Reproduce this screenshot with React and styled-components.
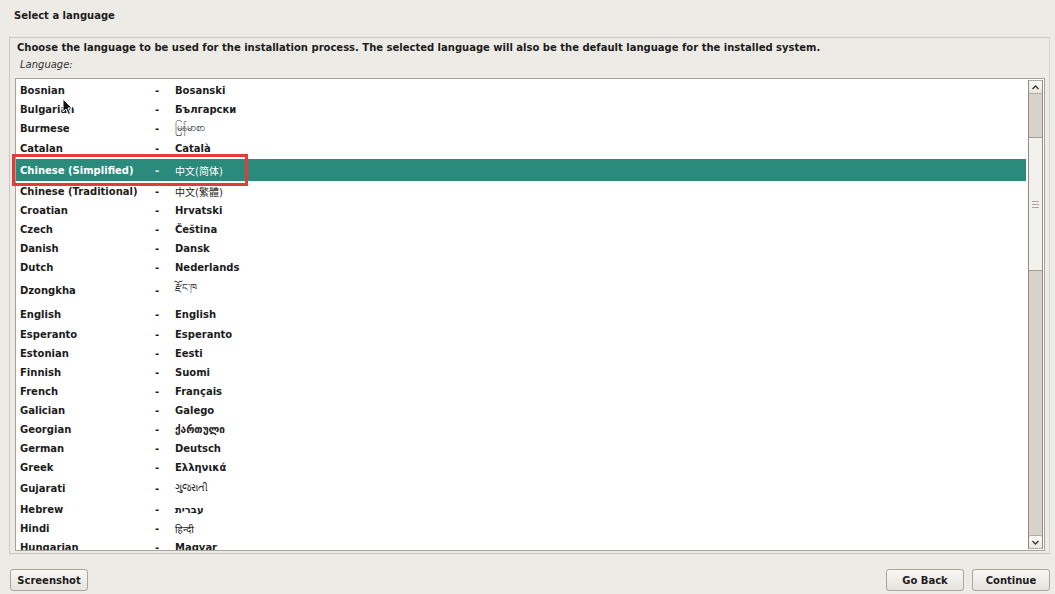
import React from "react";
import styled, { createGlobalStyle } from "styled-components";

// [english name, native name, row height, native drawn in regular weight]
const languages = [
  ["Bosnian", "Bosanski", 19],
  ["Bulgarian", "Български", 19],
  ["Burmese", "မြန်မာစာ", 19, true],
  ["Catalan", "Català", 21],
  ["Chinese (Simplified)", "中文(简体)", 22, true],
  ["Chinese (Traditional)", "中文(繁體)", 20, true],
  ["Croatian", "Hrvatski", 19],
  ["Czech", "Čeština", 19],
  ["Danish", "Dansk", 19],
  ["Dutch", "Nederlands", 19],
  ["Dzongkha", "རྫོང་ཁ", 26, true],
  ["English", "English", 22],
  ["Esperanto", "Esperanto", 19],
  ["Estonian", "Eesti", 19],
  ["Finnish", "Suomi", 19],
  ["French", "Français", 19],
  ["Galician", "Galego", 19],
  ["Georgian", "ქართული", 19],
  ["German", "Deutsch", 19],
  ["Greek", "Ελληνικά", 19],
  ["Gujarati", "ગુજરાતી", 22, true],
  ["Hebrew", "עברית", 20],
  ["Hindi", "हिन्दी", 19, true],
  ["Hungarian", "Magyar", 19],
  ["Icelandic", "Íslenska", 19],
];

const SELECTED = "Chinese (Simplified)";

const App = () => {
  return (
    <Page>
      <GlobalStyle />
      <Title>Select a language</Title>
      <Frame>
        <Description>
          Choose the language to be used for the installation process. The selected language will also be the default language for the installed system.
        </Description>
        <FieldLabel>Language:</FieldLabel>
        <ListBox>
          <Rows>
            {languages.map(([name, native, h, plain]) => (
              <Row key={name} $height={h} $selected={name === SELECTED}>
                <Name>{name}</Name>
                <Dash>-</Dash>
                <Native $plain={plain}>{native}</Native>
              </Row>
            ))}
            <Cursor width="12" height="18" viewBox="0 0 12 18">
              <path d="M1 1 L1 14 L4 11 L6.5 16.5 L8.5 15.5 L6 10 L10 10 Z" fill="#111" stroke="#fff" strokeWidth="1" />
            </Cursor>
          </Rows>
          <Scrollbar>
            <ArrowBtn>
              <svg width="7" height="5" viewBox="0 0 7 5">
                <path d="M0.5 4 L3.5 1 L6.5 4" fill="none" stroke="#333" strokeWidth="1.3" />
              </svg>
            </ArrowBtn>
            <Trough>
              <TroughGap $height={43} />
              <Thumb>
                <Grip />
                <Grip />
                <Grip />
              </Thumb>
            </Trough>
            <ArrowBtn>
              <svg width="7" height="5" viewBox="0 0 7 5">
                <path d="M0.5 1 L3.5 4 L6.5 1" fill="none" stroke="#333" strokeWidth="1.3" />
              </svg>
            </ArrowBtn>
          </Scrollbar>
          <Marker />
        </ListBox>
      </Frame>
      <Footer>
        <Button>Screenshot</Button>
        <ButtonGroup>
          <Button>Go Back</Button>
          <Button>Continue</Button>
        </ButtonGroup>
      </Footer>
    </Page>
  );
};

export default App;

const GlobalStyle = createGlobalStyle`
  html, body {
    margin: 0;
    padding: 0;
    background: #edebe6;
  }
  body {
    font-family: "DejaVu Sans", "Noto Sans", "Noto Sans CJK SC", sans-serif;
    color: #1c1c1c;
  }
`;

const Page = styled.div`
  width: 1055px;
  height: 594px;
  overflow: hidden;
  display: flex;
  flex-direction: column;
  background: #edebe6;
`;

const Title = styled.div`
  height: 37px;
  padding: 9px 0 0 14px;
  box-sizing: border-box;
  font-size: 10px;
  font-weight: bold;
  line-height: 13px;
`;

const Frame = styled.div`
  margin: 0 5px 0 9px;
  height: 517px;
  box-sizing: border-box;
  border: 1px solid #cbc6be;
  border-right-color: #d8d4cd;
  padding: 3px 4px 2px 5px;
  display: flex;
  flex-direction: column;
`;

const Description = styled.div`
  font-size: 10px;
  font-weight: bold;
  line-height: 14px;
  padding-left: 2px;
  white-space: nowrap;
`;

const FieldLabel = styled.div`
  font-size: 10px;
  font-style: italic;
  color: #333;
  line-height: 14px;
  padding: 3px 0 0 5px;
  height: 23px;
  box-sizing: border-box;
`;

const ListBox = styled.div`
  position: relative;
  flex: 1;
  display: flex;
  border: 1px solid #a7a29a;
  background: #fff;
  min-height: 0;
`;

const Rows = styled.div`
  position: relative;
  flex: 1;
  overflow: hidden;
  padding-top: 2px;
`;

const Row = styled.div`
  display: flex;
  align-items: center;
  height: ${p => p.$height}px;
  margin-right: 2px;
  padding-left: 4px;
  font-size: 10px;
  font-weight: bold;
  white-space: nowrap;
  background: ${p => (p.$selected ? "#2a8a7b" : "transparent")};
  color: ${p => (p.$selected ? "#fff" : "#1c1c1c")};
`;

const Name = styled.span`
  width: 135px;
`;

const Dash = styled.span`
  width: 20px;
`;

const Native = styled.span`
  font-weight: ${p => (p.$plain ? "normal" : "bold")};
`;

const Marker = styled.div`
  position: absolute;
  left: -4px;
  top: 75px;
  width: 230px;
  height: 26px;
  border: 3px solid #e23b3b;
  pointer-events: none;
`;

const Cursor = styled.svg`
  position: absolute;
  left: 46px;
  top: 19px;
`;

const Scrollbar = styled.div`
  width: 13px;
  margin: 1px 1px 1px 0;
  display: flex;
  flex-direction: column;
  border-left: 1px solid #8f8a82;
  border-right: 1px solid #8f8a82;
  background: #d7d2ca;
`;

const ArrowBtn = styled.div`
  height: 12px;
  display: flex;
  align-items: center;
  justify-content: center;
  background: linear-gradient(#fbfaf8, #e9e6e1);
  border-top: 1px solid #b0aba3;
  border-bottom: 1px solid #b0aba3;
  border-radius: 2px;
`;

const Trough = styled.div`
  flex: 1;
  display: flex;
  flex-direction: column;
`;

const TroughGap = styled.div`
  height: ${p => p.$height}px;
`;

const Thumb = styled.div`
  height: 132px;
  background: #f3f1ed;
  border-top: 1px solid #a39e96;
  border-bottom: 1px solid #a39e96;
  display: flex;
  flex-direction: column;
  align-items: center;
  justify-content: center;
  gap: 2px;
`;

const Grip = styled.div`
  width: 7px;
  height: 1px;
  background: #a9a49c;
`;

const Footer = styled.div`
  display: flex;
  justify-content: space-between;
  padding: 15px 5px 0 10px;
`;

const ButtonGroup = styled.div`
  display: flex;
  gap: 8px;
`;

const Button = styled.button`
  width: 78px;
  height: 22px;
  padding: 0;
  font-family: "DejaVu Sans", sans-serif;
  font-size: 10px;
  font-weight: bold;
  color: #1c1c1c;
  border: 1px solid #aaa59d;
  border-radius: 3px;
  background: linear-gradient(#f8f7f5, #e6e3dd);
`;
